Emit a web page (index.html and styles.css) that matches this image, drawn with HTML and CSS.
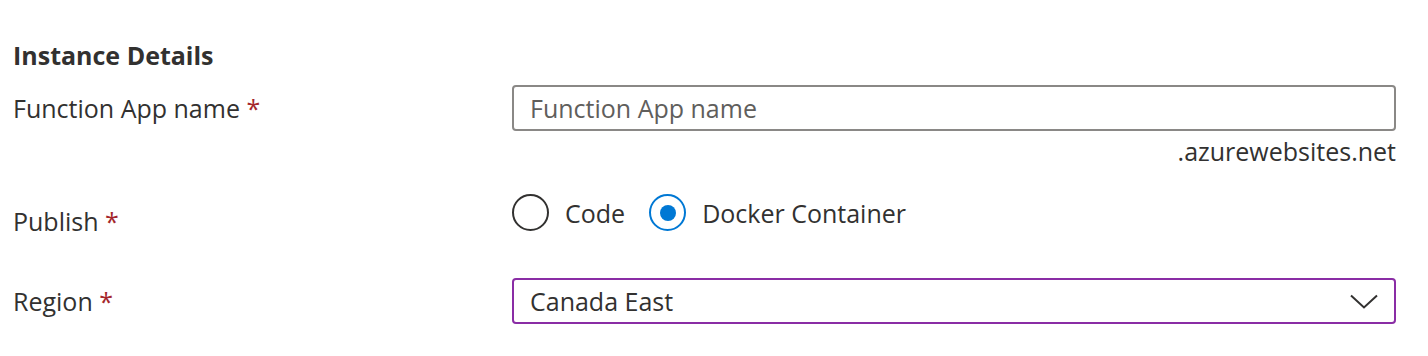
FILE: index.html
```html
<!DOCTYPE html>
<html lang="en">
<head>
  <meta charset="UTF-8" />
  <title>Instance Details</title>
  <link rel="stylesheet" href="styles.css">
</head>
<body>
  <div class="section">
    <h2 class="section-title">Instance Details</h2>

    <!-- Function App name -->
    <div class="row row-name">
      <div class="label">Function App name <span class="req">*</span></div>
      <div class="control">
        <input class="text-input" type="text" placeholder="Function App name" />
        <div class="suffix">.azurewebsites.net</div>
      </div>
    </div>

    <!-- Publish -->
    <div class="row row-publish">
      <div class="label">Publish <span class="req">*</span></div>
      <div class="control radios">
        <label class="radio">
          <span class="circle"></span>
          <span>Code</span>
        </label>
        <label class="radio checked">
          <span class="circle"></span>
          <span>Docker Container</span>
        </label>
      </div>
    </div>

    <!-- Region -->
    <div class="row row-region">
      <div class="label">Region <span class="req">*</span></div>
      <div class="control">
        <div class="select">
          <span>Canada East</span>
          <svg class="chevron" width="28" height="15" viewBox="0 0 28 15">
            <path d="M1 1.5 L14 13.5 L27 1.5" fill="none" stroke="#323130" stroke-width="2" />
          </svg>
        </div>
      </div>
    </div>
  </div>
</body>
</html>
```

FILE: styles.css
```css
body {
  margin: 0;
  background: #fff;
  font-family: "Open Sans", "Noto Sans", sans-serif;
  font-size: 25px;
  color: #323130;
}

.section {
  padding: 0 32px 0 13px;
}

.section-title {
  margin: 37px 0 0;
  font-size: 25px;
  font-weight: 700;
  line-height: 36px;
}

.row {
  display: flex;
}

.label {
  width: 499px;
  flex-shrink: 0;
  line-height: 36px;
}

.req {
  color: #a4262c;
}

.control {
  flex: 1;
}

.row-name {
  margin-top: 12px;
}

.row-name .label {
  padding-top: 5px;
}

.text-input {
  display: block;
  width: 100%;
  height: 46px;
  box-sizing: border-box;
  border: 2px solid #8a8886;
  border-radius: 4px;
  padding: 0 16px;
  font-family: inherit;
  font-size: 25px;
  color: #323130;
  outline: none;
}

.text-input::placeholder {
  color: #605e5c;
}

.suffix {
  text-align: right;
  line-height: 36px;
  margin-top: 2px;
}

.row-publish {
  margin-top: 25px;
  align-items: flex-start;
}

.row-publish .label {
  padding-top: 9px;
}

.radios {
  display: flex;
  align-items: center;
  gap: 24px;
}

.radio {
  display: flex;
  align-items: center;
  gap: 16px;
}

.circle {
  width: 37px;
  height: 37px;
  box-sizing: border-box;
  border: 2px solid #323130;
  border-radius: 50%;
  display: flex;
  align-items: center;
  justify-content: center;
}

.radio.checked .circle {
  border-color: #0078d4;
}

.radio.checked .circle::after {
  content: "";
  width: 16px;
  height: 16px;
  border-radius: 50%;
  background: #0078d4;
}

.row-region {
  margin-top: 39px;
  align-items: center;
}

.select {
  height: 46px;
  box-sizing: border-box;
  border: 2px solid #8a2da5;
  border-radius: 4px;
  padding: 0 16px;
  display: flex;
  align-items: center;
  justify-content: space-between;
}
```
